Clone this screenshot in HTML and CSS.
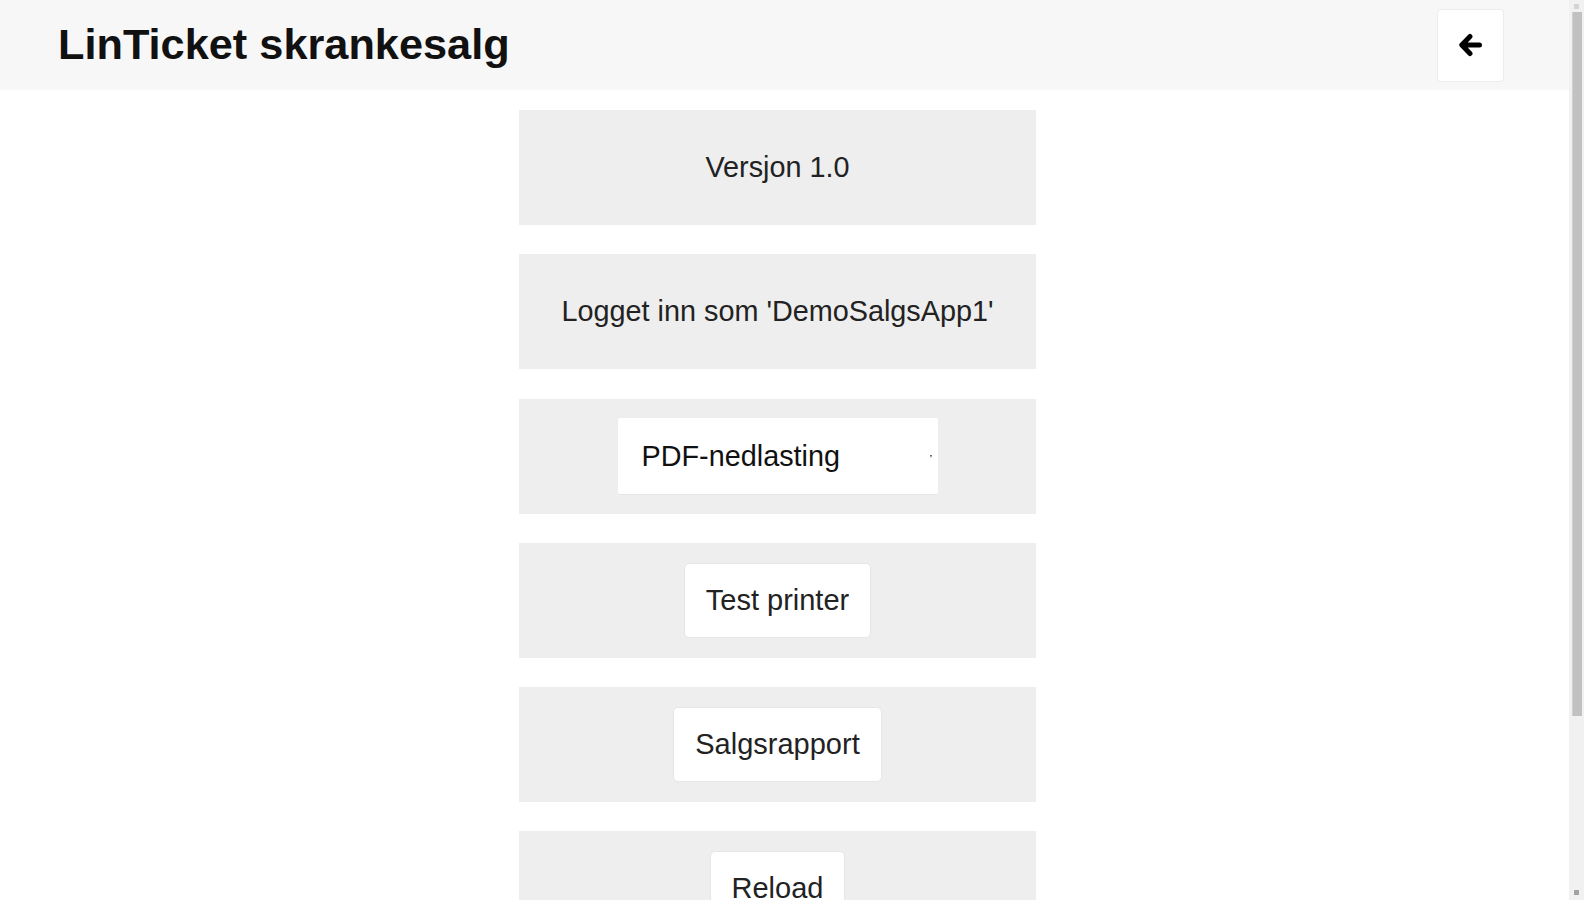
FILE: index.html
```html
<!DOCTYPE html>
<html lang="no">
<head>
<meta charset="utf-8">
<title>LinTicket skrankesalg</title>
<link rel="stylesheet" href="styles.css">
</head>
<body>
<div class="app">
  <header class="topbar">
    <h1 class="title">LinTicket skrankesalg</h1>
    <button class="back-btn" aria-label="Tilbake">
      <svg width="26" height="24" viewBox="0 0 26 24" aria-hidden="true">
        <path d="M12 3.5 L3.8 12 L12 20.5 M5 12 H21.5" fill="none" stroke="#000" stroke-width="5" stroke-linecap="round" stroke-linejoin="round"/>
      </svg>
    </button>
  </header>
  <main class="main">
    <div class="list">
      <section class="panel"><span class="panel-text">Versjon 1.0</span></section>
      <section class="panel"><span class="panel-text">Logget inn som 'DemoSalgsApp1'</span></section>
      <section class="panel">
        <div class="select-wrap">
          <select class="select">
            <option>PDF-nedlasting</option>
          </select>
          <span class="select-arrow"></span>
        </div>
      </section>
      <section class="panel"><button class="btn">Test printer</button></section>
      <section class="panel"><button class="btn">Salgsrapport</button></section>
      <section class="panel"><button class="btn">Reload</button></section>
    </div>
  </main>
</div>
<div class="scrollbar" aria-hidden="true">
  <span class="sb-arrow"></span>
  <span class="sb-thumb"></span>
  <span class="sb-track"></span>
  <span class="sb-arrow sb-arrow-down"></span>
</div>
</body>
</html>
```
FILE: styles.css
```css
html, body {
  margin: 0;
  padding: 0;
  height: 100%;
  overflow: hidden;
}
body {
  font-family: "Liberation Sans", Arial, sans-serif;
  color: #222;
  background: #fff;
  display: flex;
}
.app {
  flex: 1;
  min-width: 0;
  height: 100vh;
  overflow: hidden;
}
.scrollbar {
  width: 15px;
  height: 100vh;
  background: #f1f1f1;
  display: flex;
  flex-direction: column;
  align-items: center;
  box-sizing: border-box;
  padding: 4px 0 5px;
}
.sb-arrow {
  width: 5px;
  height: 5px;
  background: #d4d4d4;
  margin-bottom: 3px;
}
.sb-arrow-down {
  margin: 3px 0 0;
  background: #a3a3a3;
}
.sb-thumb {
  width: 9px;
  height: 704px;
  background: #c1c1c1;
  border-left: 1px solid #d0d0d0;
}
.sb-track {
  flex: 1;
}
.topbar {
  height: 90px;
  background: #f7f7f7;
  display: flex;
  align-items: center;
  justify-content: space-between;
  padding: 0 65px 0 58px;
}
.title {
  margin: 0;
  font-size: 43.3px;
  font-weight: bold;
  color: #111;
  line-height: 1;
}
.back-btn {
  width: 67px;
  height: 73px;
  background: #fff;
  border: 1px solid #ececec;
  border-radius: 4px;
  display: flex;
  align-items: center;
  justify-content: center;
  padding: 0;
}
.main {
  display: flex;
  justify-content: center;
  padding: 20px 14px 170px 0;
}
.list {
  width: 517px;
  display: flex;
  flex-direction: column;
  gap: 29.3px;
}
.panel {
  height: 115px;
  flex-shrink: 0;
  background: #eeeeee;
  display: flex;
  align-items: center;
  justify-content: center;
  font-size: 28.8px;
  color: #222;
}
.select-wrap {
  position: relative;
  width: 320px;
  height: 77px;
}
.select {
  appearance: none;
  -webkit-appearance: none;
  width: 100%;
  height: 100%;
  border: none;
  border-bottom: 1px solid #e4e4e4;
  border-radius: 2px;
  background: #fff;
  font-family: "Liberation Sans", Arial, sans-serif;
  font-size: 28.8px;
  color: #111;
  padding: 0 24px;
}
.select-arrow {
  position: absolute;
  right: 6px;
  top: 37px;
  width: 0;
  height: 0;
  border-left: 1.5px solid transparent;
  border-right: 1.5px solid transparent;
  border-top: 3px solid #555;
}
.btn {
  height: 75px;
  background: #fff;
  border: 1px solid #e6e6e6;
  border-radius: 5px;
  font-family: "Liberation Sans", Arial, sans-serif;
  font-size: 29px;
  color: #222;
  padding: 0 21px;
}
```
